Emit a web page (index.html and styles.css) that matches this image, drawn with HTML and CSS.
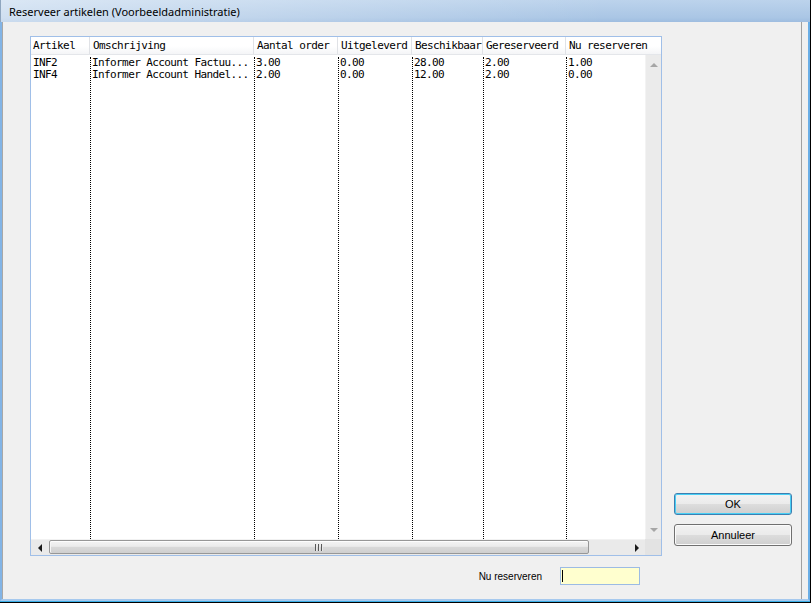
FILE: index.html
```html
<!DOCTYPE html>
<html>
<head>
<meta charset="utf-8">
<title>Reserveer artikelen</title>
<link rel="stylesheet" href="styles.css">
</head>
<body>
<div class="window">
  <div class="titlebar">Reserveer artikelen (Voorbeeldadministratie)</div>
  <div class="client">
    <div class="inner">
      <div class="main">
        <div class="grid">
          <div class="header">
            <div class="hcell first">Artikel</div>
            <div class="hcell">Omschrijving</div>
            <div class="hcell">Aantal order</div>
            <div class="hcell">Uitgeleverd</div>
            <div class="hcell">Beschikbaar</div>
            <div class="hcell">Gereserveerd</div>
            <div class="hcell last">Nu reserveren</div>
          </div>
          <div class="body">
            <div class="col first"><div>INF2</div><div>INF4</div></div>
            <div class="col"><div>Informer Account Factuu...</div><div>Informer Account Handel...</div></div>
            <div class="col"><div>3.00</div><div>2.00</div></div>
            <div class="col"><div>0.00</div><div>0.00</div></div>
            <div class="col"><div>28.00</div><div>12.00</div></div>
            <div class="col"><div>2.00</div><div>2.00</div></div>
            <div class="col"><div>1.00</div><div>0.00</div></div>
            <div class="vscroll">
              <div class="vbtn"><span class="arr-up"></span></div>
              <div class="vbtn"><span class="arr-down"></span></div>
            </div>
          </div>
          <div class="hrow">
            <div class="hscroll">
              <div class="hbtn"><span class="arr-left"></span></div>
              <div class="thumb"><span class="grip"><i></i><i></i><i></i></span></div>
              <div class="htrack"></div>
              <div class="hbtn"><span class="arr-right"></span></div>
            </div>
            <div class="corner"></div>
          </div>
        </div>
        <div class="entry">
          <span class="label">Nu reserveren</span>
          <div class="input"><span class="caret"></span></div>
        </div>
      </div>
      <div class="side">
        <button class="btn ok">OK</button>
        <button class="btn">Annuleer</button>
      </div>
    </div>
  </div>
</div>
</body>
</html>
```

FILE: styles.css
```css
html, body {
  margin: 0;
  padding: 0;
  background: #f0f0f0;
}

.window {
  width: 811px;
  height: 603px;
  box-sizing: border-box;
  border-right: 1px solid #000;
  border-bottom: 1px solid #000;
  padding-bottom: 1px;
  box-shadow: inset 0 -1px 0 #3aaee6;
  display: flex;
  flex-direction: column;
  background: #f0f0f0;
  overflow: hidden;
}

.titlebar {
  height: 22px;
  flex: none;
  box-sizing: border-box;
  padding-left: 8px;
  line-height: 23px;
  font-family: "Noto Sans", "Open Sans", sans-serif;
  font-size: 11px;
  color: #000;
  background:
    linear-gradient(to right, rgba(255,255,255,0.45), rgba(255,255,255,0) 75%),
    linear-gradient(#bcd3ec, #aac6e5 80%, #9fbde0);
  border-left: 1px solid #8fa6bf;
}

.client {
  flex: 1;
  display: flex;
  border-left: 2px solid #82b4e6;
  border-right: 2px solid #6aaee6;
  border-bottom: 2px solid #a6c9ee;
  padding-right: 6px;
  min-height: 0;
}

.inner {
  flex: 1;
  display: flex;
  border-left: 1px solid #a8a8a8;
  border-right: 1px solid #a0a0a0;
}

.main {
  padding-left: 27px;
  padding-top: 14px;
  display: flex;
  flex-direction: column;
}

.grid {
  width: 632px;
  height: 520px;
  box-sizing: border-box;
  border: 1px solid #a0bfe8;
  background: #fff;
  display: flex;
  flex-direction: column;
  font-family: "DejaVu Sans Mono", "Liberation Mono", monospace;
  font-size: 11px;
  letter-spacing: -0.6px;
  color: #000;
}

.header {
  height: 18px;
  flex: none;
  box-sizing: border-box;
  display: grid;
  grid-template-columns: 59px 164px 84px 74px 71px 83px 95px;
  background: linear-gradient(#ffffff, #ffffff 55%, #f4f5f7);
  border-bottom: 1px solid #e4e6ea;
}

.hcell {
  line-height: 17px;
  padding-left: 3px;
  border-right: 1px solid #e0e2e6;
  white-space: nowrap;
  overflow: hidden;
}

.hcell.first {
  padding-left: 2px;
}

.hcell.last {
  border-right: none;
}

.body {
  height: 484px;
  flex: none;
  display: grid;
  grid-template-columns: 59px 164px 84px 74px 71px 83px 79px 16px;
}

.col {
  margin-top: 2px;
  border-left: 1px dotted #000;
  padding-left: 1px;
  line-height: 12px;
  white-space: nowrap;
  overflow: hidden;
}

.col.first {
  border-left: none;
  padding-left: 2px;
}

.vscroll {
  display: flex;
  flex-direction: column;
  justify-content: space-between;
  background: #ebebeb;
  border-left: 1px solid #f3f3f3;
}

.vbtn {
  height: 17px;
  display: flex;
  align-items: center;
  justify-content: center;
}

.arr-up, .arr-down, .arr-left, .arr-right {
  width: 0;
  height: 0;
  display: block;
}

.arr-up {
  border-left: 4px solid transparent;
  border-right: 4px solid transparent;
  border-bottom: 4px solid #a6a6a6;
  margin-top: 3px;
}

.arr-down {
  border-left: 4px solid transparent;
  border-right: 4px solid transparent;
  border-top: 4px solid #a6a6a6;
  margin-top: -1px;
}

.arr-left {
  border-top: 4px solid transparent;
  border-bottom: 4px solid transparent;
  border-right: 4px solid #1a1a1a;
}

.arr-right {
  border-top: 4px solid transparent;
  border-bottom: 4px solid transparent;
  border-left: 4px solid #1a1a1a;
}

.hrow {
  height: 16px;
  flex: none;
  display: flex;
}

.hscroll {
  width: 614px;
  display: flex;
  background: #eaeaea;
  border-top: 1px solid #f2f2f2;
  box-sizing: border-box;
}

.hbtn {
  width: 17px;
  flex: none;
  display: flex;
  align-items: center;
  justify-content: center;
}

.thumb {
  width: 540px;
  height: 14px;
  flex: none;
  margin-left: 1px;
  box-sizing: border-box;
  border: 1px solid #979797;
  border-radius: 2px;
  background: linear-gradient(#f4f4f4, #ebebeb 45%, #d9d9d9 50%, #cfcfcf);
  box-shadow: inset 0 1px 0 #fdfdfd, inset 1px 0 0 #f6f6f6;
  display: flex;
  align-items: center;
  padding-left: 265px;
}

.grip {
  display: flex;
  gap: 1px;
}

.grip i {
  display: block;
  width: 1px;
  height: 7px;
  background: #595959;
  border-right: 1px solid #e8e8e8;
}

.htrack {
  flex: 1;
}

.corner {
  width: 16px;
  background: #e3e3e3;
}

.entry {
  margin-top: 11px;
  display: flex;
  align-items: center;
  justify-content: flex-end;
  padding-right: 22px;
  gap: 18px;
}

.label {
  font-family: "Liberation Sans", Arial, sans-serif;
  font-size: 10px;
  color: #000;
}

.input {
  width: 80px;
  height: 18px;
  box-sizing: border-box;
  border: 1px solid #9cbbe4;
  background: #ffffcf;
  display: flex;
  align-items: center;
  padding-left: 1px;
}

.caret {
  display: block;
  width: 1px;
  height: 12px;
  background: #000;
}

.side {
  flex: 1;
  padding-left: 12px;
  padding-right: 9px;
  padding-top: 471px;
  display: flex;
  flex-direction: column;
  gap: 9px;
}

.btn {
  width: 118px;
  height: 22px;
  margin: 0;
  padding: 0;
  box-sizing: border-box;
  border: 1px solid #707070;
  border-radius: 3px;
  background: linear-gradient(#f2f2f2, #ebebeb 48%, #dddddd 50%, #cfcfcf);
  box-shadow: inset 0 0 0 1px #fbfbfb;
  font-family: "Liberation Sans", Arial, sans-serif;
  font-size: 11px;
  color: #000;
}

.btn.ok {
  border-color: #3c7fb1;
  box-shadow: inset 0 0 0 1px #48cff5;
}
```
